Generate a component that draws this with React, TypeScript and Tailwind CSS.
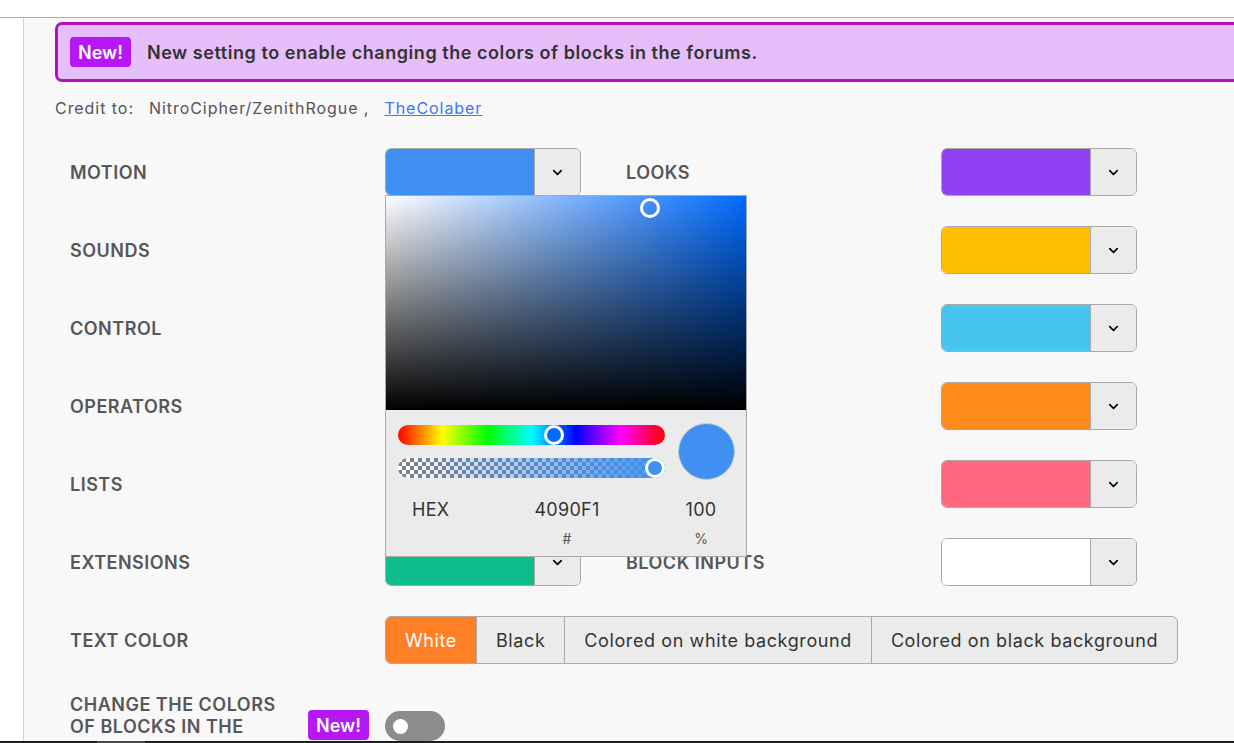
import React from 'react';
import { ChevronDown } from 'lucide-react';

interface ColorFieldProps {
    color: string;
    children?: React.ReactNode;
}

const ColorField: React.FC<ColorFieldProps> = ({ color, children }) => (
    <div className="relative w-[196px] h-[48px]">
        <div className="flex h-full w-full rounded-[6px] border border-[#aaaaaa] overflow-hidden">
            <div className="flex-1" style={{ backgroundColor: color }} />
            <div className="w-[46px] flex items-center justify-center bg-[#ebebeb] border-l border-[#aaaaaa]">
                <ChevronDown className="h-[15px] w-[15px] text-black" strokeWidth={2.6} />
            </div>
        </div>
        {children}
    </div>
);

const Label: React.FC<{ text: string }> = ({ text }) => (
    <div className="w-[315px] pt-[1px] text-[18px] font-semibold tracking-[0.5px] text-[#575757] uppercase">{text}</div>
);

const ColorPicker: React.FC = () => (
    <div className="absolute left-0 top-[47px] z-10 w-[362px] h-[362px] bg-[#ebebeb] border border-[#aaaaaa] flex flex-col">
        {/* saturation / value area */}
        <div className="relative h-[214px] w-full bg-[#006bff]">
            <div className="absolute inset-0 bg-[linear-gradient(to_right,#ffffff,rgba(255,255,255,0))]" />
            <div className="absolute inset-0 bg-[linear-gradient(to_bottom,rgba(0,0,0,0),#000000)]" />
            <div className="absolute left-[254px] top-[2px] h-[20px] w-[20px] rounded-full border-[3px] border-white" />
        </div>
        <div className="flex items-center pl-[12px] pt-[13px]">
            <div className="flex flex-col gap-[13px] w-[267px]">
                <div className="relative h-[20px] rounded-full bg-[linear-gradient(to_right,#ff0000,#ffff00,#00ff00,#00ffff,#0000ff,#ff00ff,#ff0000)]">
                    <div className="absolute left-[146px] top-0 h-[20px] w-[20px] rounded-full border-[3px] border-white bg-[#006bff]" />
                </div>
                <div className="relative h-[20px] rounded-full bg-[linear-gradient(to_right,rgba(64,144,241,0),#4090f1),repeating-conic-gradient(#808080_0_25%,#ffffff_0_50%)] [background-size:100%_100%,8px_8px]">
                    <div className="absolute right-0 top-0 h-[20px] w-[20px] rounded-full border-[3px] border-white bg-[#4090f1]" />
                </div>
            </div>
            <div className="ml-[13px] h-[57px] w-[57px] rounded-full bg-[#4090f1] border border-[#c8c8c8]" />
        </div>
        <div className="flex mt-[16px] text-[18px] tracking-[0.3px] text-[#333333]">
            <div className="w-[121px] pl-[26px]">HEX</div>
            <div className="w-[120px] text-center">4090F1</div>
            <div className="ml-[44px] w-[60px] text-center">100</div>
        </div>
        <div className="flex mt-[5px] text-[14px] text-[#555555]">
            <div className="w-[121px]" />
            <div className="w-[120px] text-center">#</div>
            <div className="ml-[44px] w-[60px] text-center">%</div>
        </div>
    </div>
);

const rows: { left: string; leftColor: string; right: string; rightColor: string }[] = [
    { left: 'Motion', leftColor: '#4090f1', right: 'Looks', rightColor: '#9042f2' },
    { left: 'Sounds', leftColor: '#cf63cf', right: 'Events', rightColor: '#ffbf00' },
    { left: 'Control', leftColor: '#ffab19', right: 'Sensing', rightColor: '#47c5f1' },
    { left: 'Operators', leftColor: '#59c059', right: 'Variables', rightColor: '#ff8c1a' },
    { left: 'Lists', leftColor: '#ff661a', right: 'My Blocks', rightColor: '#ff6680' },
    { left: 'Extensions', leftColor: '#0fbd8c', right: 'Block Inputs', rightColor: '#ffffff' },
];

const textOptions = ['White', 'Black', 'Colored on white background', 'Colored on black background'];

export default function App() {
    return (
        <div className="w-[1234px] h-[743px] overflow-hidden flex flex-col bg-white font-['Inter','Noto_Sans',sans-serif]">
            <div className="h-[18px] shrink-0 bg-white border-b border-[#b0b0b0]" />
            <div className="flex flex-1 min-h-0">
                <div className="w-[24px] shrink-0 bg-white border-r border-[#d2d2d2]" />
                <main className="flex-1 min-w-0 overflow-hidden bg-[#f8f8f8] pl-[31px] pt-[4px]">
                    <div className="mr-[-20px] h-[60px] flex items-center rounded-l-[7px] border-[3px] border-[#b40fc1] bg-[#e6bef9] pl-[12px]">
                        <span className="h-[30px] px-[8px] flex items-center rounded-[4px] bg-[#b517f5] text-white text-[18px] font-semibold">New!</span>
                        <span className="ml-[16px] text-[18px] tracking-[0.55px] font-semibold text-[#333333]">New setting to enable changing the colors of blocks in the forums.</span>
                    </div>
                    <div className="mt-[16px] h-[20px] flex items-center text-[16px] tracking-[0.95px] text-[#555555]">
                        <span>Credit to:</span>
                        <span className="ml-[15px]">NitroCipher/ZenithRogue ,</span>
                        <a className="ml-[15px] text-[#3b76f6] underline">TheColaber</a>
                    </div>
                    <div className="mt-[30px] pl-[15px] flex flex-col gap-[30px]">
                        {rows.map((row, i) => (
                            <div key={row.left} className="flex items-center h-[48px]">
                                <Label text={row.left} />
                                <ColorField color={row.leftColor}>{i === 0 && <ColorPicker />}</ColorField>
                                <div className="ml-[45px]">
                                    <Label text={row.right} />
                                </div>
                                <ColorField color={row.rightColor} />
                            </div>
                        ))}
                        <div className="flex items-center h-[48px]">
                            <Label text="Text color" />
                            <div className="flex h-[48px] rounded-[6px] border border-[#aaaaaa] bg-[#ebebeb] overflow-hidden text-[18px] tracking-[0.6px] text-[#333333]">
                                {textOptions.map((opt, i) => (
                                    <div
                                        key={opt}
                                        className={`flex items-center px-[19px] ${i > 0 ? 'border-l border-[#aaaaaa]' : ''} ${i === 0 ? 'bg-[#ff7f26] text-white' : ''}`}
                                    >
                                        {opt}
                                    </div>
                                ))}
                            </div>
                        </div>
                        <div className="flex items-start">
                            <div className="w-[315px] flex items-center">
                                <div className="w-[225px] text-[18px] leading-[22px] tracking-[0.5px] font-semibold text-[#575757] uppercase">
                                    Change the colors of blocks in the forums
                                </div>
                                <span className="ml-[13px] mt-[16px] h-[30px] px-[8px] flex items-center rounded-[4px] bg-[#b517f5] text-white text-[18px] font-semibold self-start">New!</span>
                            </div>
                            <div className="mt-[17px] h-[30px] w-[60px] rounded-full bg-[#8c8c8c] flex items-center pl-[8px]">
                                <div className="h-[15px] w-[15px] rounded-full bg-white" />
                            </div>
                        </div>
                    </div>
                </main>
            </div>
            <div className="h-[2px] shrink-0 flex bg-[#1e1e1e]">
                <div className="ml-[97px] w-[48px] bg-[#4a4a4a]" />
            </div>
        </div>
    );
}
